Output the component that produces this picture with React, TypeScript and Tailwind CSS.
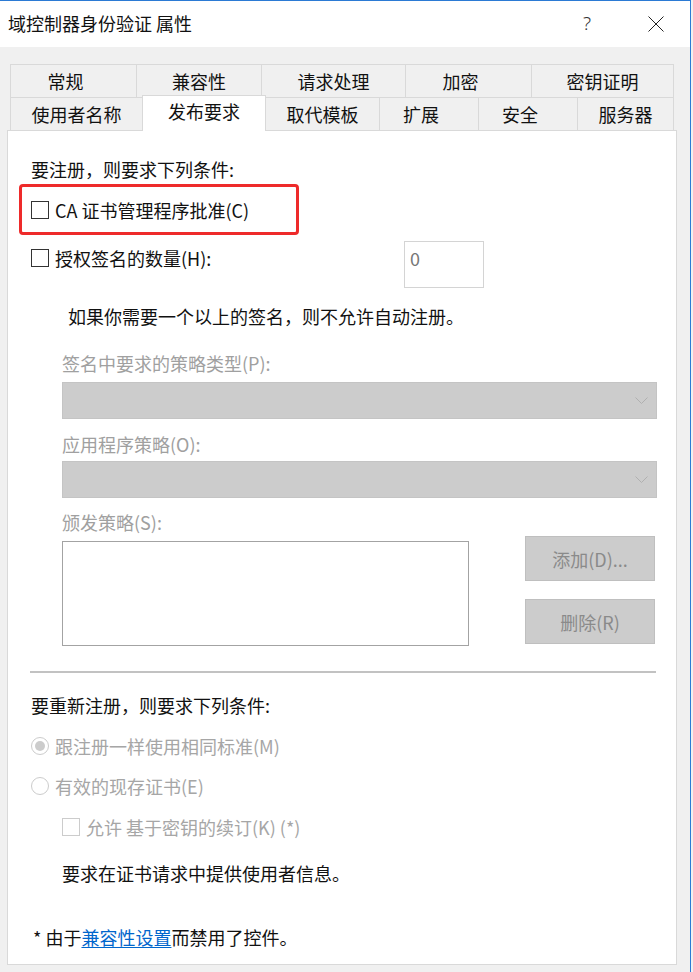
import React from "react";

const topTabs = [
  { label: "常规", w: "w-[127px]", shift: true },
  { label: "兼容性", w: "w-[125px]", shift: false },
  { label: "请求处理", w: "w-[144px]", shift: false },
  { label: "加密", w: "w-[126px]", shift: true },
  { label: "密钥证明", w: "w-[142px]", shift: false },
];

const bottomTabs = [
  { label: "使用者名称", w: "w-[133px]", shift: false, active: false },
  { label: "发布要求", w: "w-[124px]", shift: false, active: true },
  { label: "取代模板", w: "w-[114px]", shift: false, active: false },
  { label: "扩展", w: "w-[99px]", shift: true, active: false },
  { label: "安全", w: "w-[99px]", shift: true, active: false },
  { label: "服务器", w: "w-[96px]", shift: false, active: false },
];

function CheckBox({ disabled }: { disabled?: boolean }) {
  return (
    <span
      className={
        "inline-block w-[18px] h-[18px] shrink-0 bg-white border " +
        (disabled ? "border-[#cccccc]" : "border-[#333333]")
      }
    />
  );
}

function Radio({ checked }: { checked?: boolean }) {
  return (
    <span className="w-[18px] h-[18px] shrink-0 rounded-full border border-[#cccccc] bg-white flex items-center justify-center">
      {checked && <span className="w-[10px] h-[10px] rounded-full bg-[#cccccc]" />}
    </span>
  );
}

function Select() {
  return (
    <div className="ml-[31px] w-[595px] h-[37px] bg-[#cccccc] border border-[#c4c4c4] flex items-center justify-end pr-[8px]">
      <svg width="13" height="8" viewBox="0 0 13 8" fill="none">
        <polyline points="0.5,0.5 6.5,6.5 12.5,0.5" stroke="#b0b0b0" strokeWidth="1" />
      </svg>
    </div>
  );
}

export default function App() {
  return (
    <div className="w-[693px] h-[972px] bg-[#f0f0f0] overflow-hidden flex font-['Noto_Sans_CJK_SC',sans-serif] text-[18px] text-[#111111]">
      <div className="w-[691px] h-full border-t border-r border-[#2b7ad4] flex flex-col">
        {/* 标题栏 */}
        <div className="h-[46px] bg-white flex items-center">
          <span className="pl-[8px] leading-[24px] pb-[3px]">域控制器身份验证 属性</span>
          <div className="ml-auto flex items-center pr-[11px] pb-[1px]">
            <span className="w-[22px] text-center font-['Noto_Sans',sans-serif] font-light text-[19px] text-[#333]">?</span>
            <span className="ml-[35px] w-[46px] h-[24px] flex items-center justify-center">
              <svg width="16" height="16" viewBox="0 0 16 16">
                <line x1="0.5" y1="0.5" x2="15.5" y2="15.5" stroke="#222" strokeWidth="1" />
                <line x1="15.5" y1="0.5" x2="0.5" y2="15.5" stroke="#222" strokeWidth="1" />
              </svg>
            </span>
          </div>
        </div>

        {/* 选项卡 */}
        <div className="pt-[17px] pl-[10px]">
          <div className="flex h-[33px]">
            {topTabs.map((t, i) => (
              <div
                key={t.label}
                className={
                  t.w +
                  " h-[33px] border-t border-r border-[#d9d9d9] flex items-center justify-center leading-[24px] " +
                  (i === 0 ? "border-l " : "") +
                  (t.shift ? "pr-[16px]" : "")
                }
              >
                {t.label}
              </div>
            ))}
          </div>
          <div className="flex items-start h-[33px]">
            {bottomTabs.map((t, i) =>
              t.active ? (
                <div
                  key={t.label}
                  className={
                    t.w +
                    " relative z-10 -ml-[1px] -mt-[2px] h-[36px] bg-white border-t border-l border-r border-[#d9d9d9] flex items-center justify-center pb-[6px] leading-[24px]"
                  }
                >
                  {t.label}
                </div>
              ) : (
                <div
                  key={t.label}
                  className={
                    t.w +
                    " h-[33px] border-t border-r border-[#d9d9d9] flex items-center justify-center leading-[24px] " +
                    (i === 0 ? "border-l " : "") +
                    (t.shift ? "pr-[16px]" : "")
                  }
                >
                  {t.label}
                </div>
              )
            )}
          </div>
        </div>

        {/* 面板 */}
        <div className="relative ml-[7px] w-[670px] h-[835px] bg-white border border-[#d9d9d9] pl-[23px] flex flex-col leading-[24px]">
          {/* 红框标注 */}
          <div className="absolute left-[11px] top-[53px] w-[280px] h-[51px] border-[3px] border-[#ee2a2a] rounded-[4px]" />

          <div className="mt-[26px] h-[24px]">要注册，则要求下列条件:</div>

          <div className="mt-[17px] h-[24px] flex items-center gap-[6px]">
            <CheckBox />
            <span>CA 证书管理程序批准(C)</span>
          </div>

          <div className="mt-[19px] h-[47px] flex items-start">
            <div className="w-[373px] mt-[5px] h-[24px] flex items-center gap-[6px]">
              <CheckBox />
              <span>授权签名的数量(H):</span>
            </div>
            <div className="w-[80px] h-[47px] border border-[#d4d4d4] pl-[5px] pt-[4px] text-[#777777]">0</div>
          </div>

          <div className="mt-[16px] h-[24px] pl-[37px]">如果你需要一个以上的签名，则不允许自动注册。</div>

          <div className="mt-[23px] h-[24px] pl-[31px] text-[#a0a0a0]">签名中要求的策略类型(P):</div>
          <div className="mt-[7px]">
            <Select />
          </div>

          <div className="mt-[13px] h-[24px] pl-[31px] text-[#a0a0a0]">应用程序策略(O):</div>
          <div className="mt-[5px]">
            <Select />
          </div>

          <div className="mt-[12px] h-[24px] pl-[31px] text-[#a0a0a0]">颁发策略(S):</div>

          <div className="mt-[2px] ml-[31px] flex items-start">
            <div className="mt-[5px] w-[407px] h-[105px] bg-white border border-[#a3a3a3]" />
            <div className="ml-[56px] flex flex-col gap-[18px]">
              <div className="w-[130px] h-[45px] bg-[#cccccc] border border-[#bfbfbf] flex items-center justify-center text-[#8a8a8a]">
                添加(D)...
              </div>
              <div className="w-[130px] h-[45px] bg-[#cccccc] border border-[#bfbfbf] flex items-center justify-center text-[#8a8a8a]">
                删除(R)
              </div>
            </div>
          </div>

          <div className="mt-[25px] -ml-[1px] w-[626px] h-[2px] bg-[#c2c2c2]" />

          <div className="mt-[20px] h-[24px]">要重新注册，则要求下列条件:</div>

          <div className="mt-[17px] h-[24px] flex items-center gap-[6px] text-[#a6a6a6]">
            <Radio checked />
            <span>跟注册一样使用相同标准(M)</span>
          </div>
          <div className="mt-[16px] h-[24px] flex items-center gap-[6px] text-[#a6a6a6]">
            <Radio />
            <span>有效的现存证书(E)</span>
          </div>
          <div className="mt-[17px] h-[24px] pl-[31px] flex items-center gap-[6px] text-[#a6a6a6]">
            <CheckBox disabled />
            <span>允许 基于密钥的续订(K) (*)</span>
          </div>

          <div className="mt-[22px] h-[24px] pl-[31px]">要求在证书请求中提供使用者信息。</div>

          <div className="mt-[40px] h-[24px] pl-[2px]">
            * 由于<span className="text-[#0066cc] underline underline-offset-2">兼容性设置</span>而禁用了控件。
          </div>
        </div>
      </div>
    </div>
  );
}
